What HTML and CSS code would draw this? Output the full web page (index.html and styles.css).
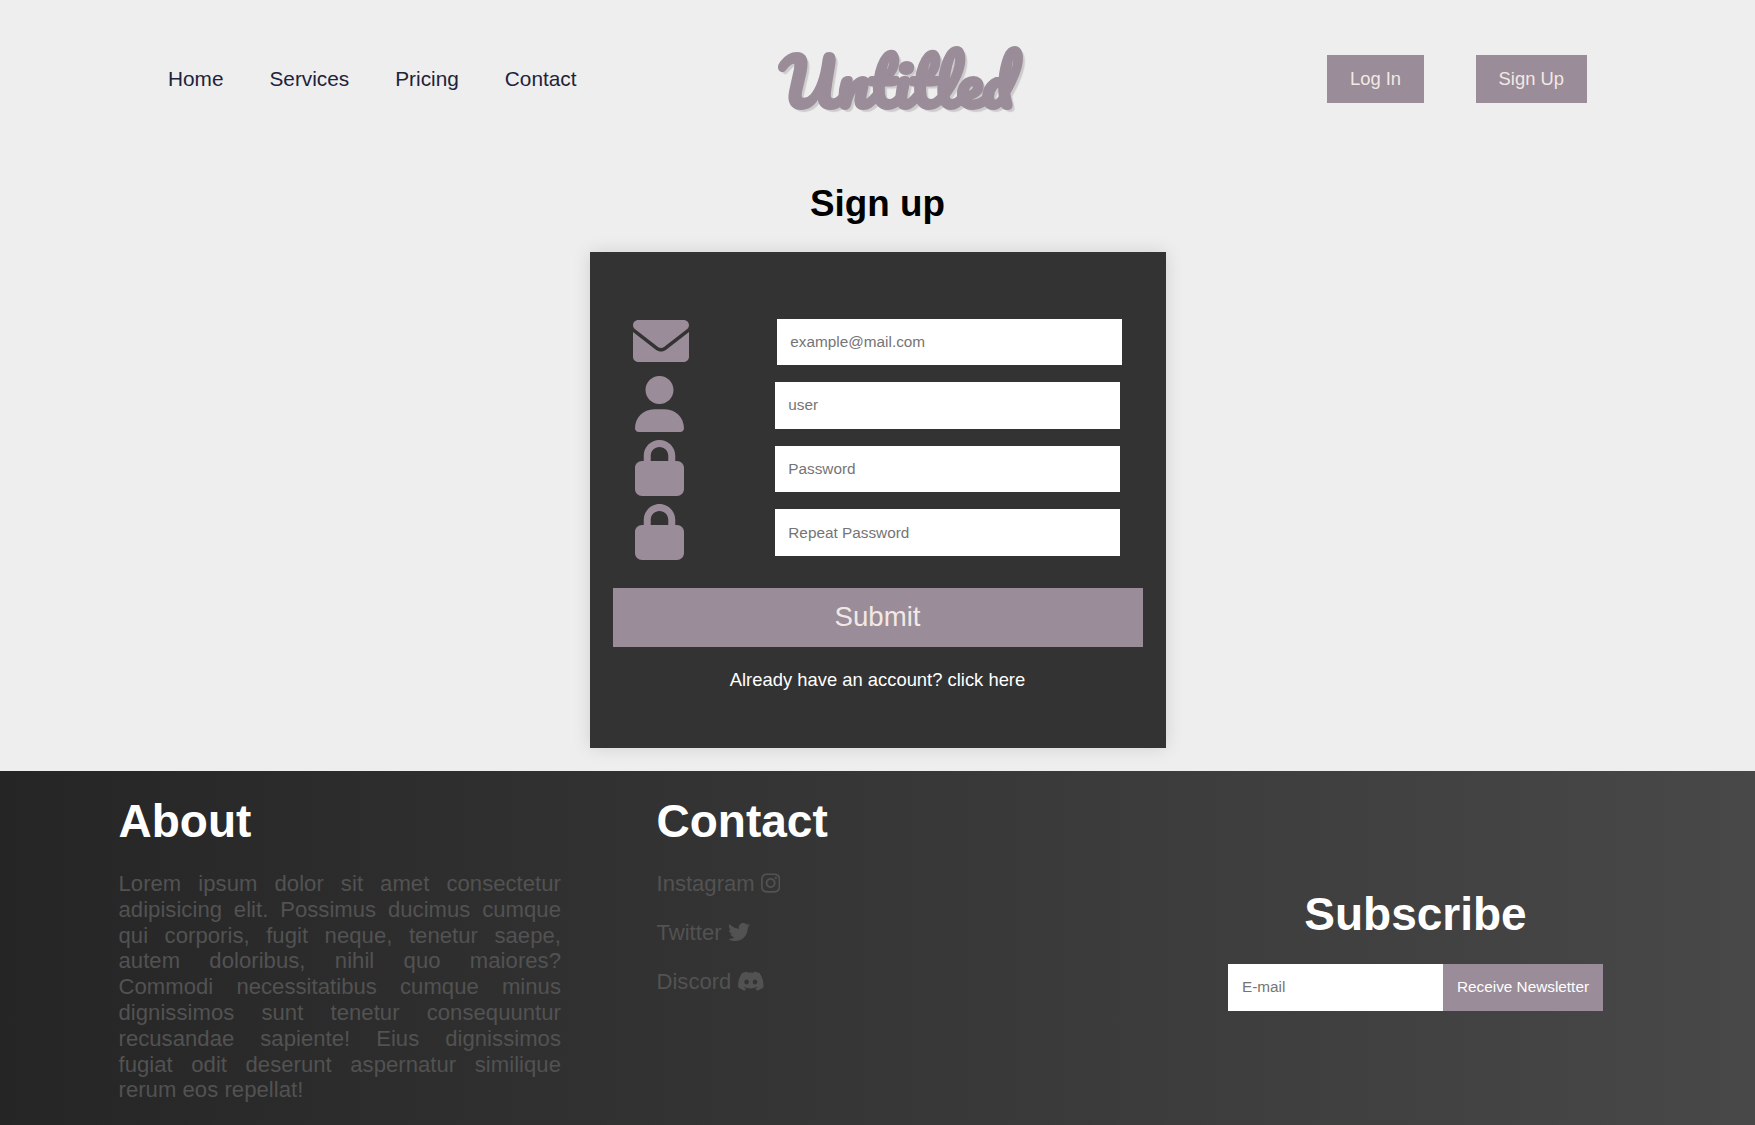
FILE: index.html
```html
<!DOCTYPE html>
<html lang="en">
<head>
<meta charset="utf-8">
<title>Untitled - Sign up</title>
<link rel="stylesheet" href="styles.css">
</head>
<body>
<header class="header">
  <nav class="nav">
    <a href="#">Home</a>
    <a href="#">Services</a>
    <a href="#">Pricing</a>
    <a href="#">Contact</a>
  </nav>
  <a class="logo" href="#">Untitled</a>
  <div class="actions">
    <a class="btn" href="#">Log In</a>
    <a class="btn" href="#">Sign Up</a>
  </div>
</header>
<main class="main">
  <h1 class="title">Sign up</h1>
  <form class="card">
    <div class="field field-mail">
      <svg class="icon icon-wide" viewBox="0 0 512 512"><path d="M256 352c-16.53 0-33.06-5.422-47.16-16.41L0 173.2V400C0 426.5 21.49 448 48 448h416c26.51 0 48-21.49 48-48V173.2l-208.8 162.5C289.1 346.6 272.5 352 256 352zM16.29 145.3l212.2 165.1c16.19 12.6 38.87 12.6 55.06 0l212.2-165.1C505.1 137.3 512 125 512 112C512 85.49 490.5 64 464 64h-416C21.49 64 0 85.49 0 112C0 125 6.01 137.3 16.29 145.3z"/></svg>
      <input class="input" type="text" placeholder="example@mail.com">
    </div>
    <div class="field">
      <svg class="icon" viewBox="0 0 448 512"><path d="M224 256c70.7 0 128-57.31 128-128s-57.3-128-128-128C153.3 0 96 57.31 96 128S153.3 256 224 256zM274.7 304H173.3C77.61 304 0 381.6 0 477.3c0 19.14 15.52 34.67 34.66 34.67h378.7C432.5 512 448 496.5 448 477.3C448 381.6 370.4 304 274.7 304z"/></svg>
      <input class="input" type="text" placeholder="user">
    </div>
    <div class="field">
      <svg class="icon" viewBox="0 0 448 512"><path d="M80 192V144C80 64.47 144.5 0 224 0C303.5 0 368 64.47 368 144V192H384C419.3 192 448 220.7 448 256V448C448 483.3 419.3 512 384 512H64C28.65 512 0 483.3 0 448V256C0 220.7 28.65 192 64 192H80zM144 192H304V144C304 99.82 268.2 64 224 64C179.8 64 144 99.82 144 144V192z"/></svg>
      <input class="input" type="password" placeholder="Password">
    </div>
    <div class="field">
      <svg class="icon" viewBox="0 0 448 512"><path d="M80 192V144C80 64.47 144.5 0 224 0C303.5 0 368 64.47 368 144V192H384C419.3 192 448 220.7 448 256V448C448 483.3 419.3 512 384 512H64C28.65 512 0 483.3 0 448V256C0 220.7 28.65 192 64 192H80zM144 192H304V144C304 99.82 268.2 64 224 64C179.8 64 144 99.82 144 144V192z"/></svg>
      <input class="input" type="password" placeholder="Repeat Password">
    </div>
    <button class="submit" type="button">Submit</button>
    <p class="login-hint">Already have an account? <a href="#">click here</a></p>
  </form>
</main>
<footer class="footer">
  <section class="about">
    <h2>About</h2>
    <p>Lorem ipsum dolor sit amet consectetur adipisicing elit. Possimus ducimus cumque qui corporis, fugit neque, tenetur saepe, autem doloribus, nihil quo maiores? Commodi necessitatibus cumque minus dignissimos sunt tenetur consequuntur recusandae sapiente! Eius dignissimos fugiat odit deserunt aspernatur similique rerum eos repellat!</p>
  </section>
  <section class="contact">
    <h2>Contact</h2>
    <ul>
      <li>Instagram <svg class="social" viewBox="0 0 448 512"><path d="M224.1 141c-63.6 0-114.9 51.3-114.9 114.9s51.3 114.9 114.9 114.9S339 319.5 339 255.9 287.7 141 224.1 141zm0 189.6c-41.1 0-74.7-33.5-74.7-74.7s33.5-74.7 74.7-74.7 74.7 33.5 74.7 74.7-33.6 74.7-74.7 74.7zm146.4-194.3c0 14.9-12 26.8-26.8 26.8-14.9 0-26.8-12-26.8-26.8s12-26.8 26.8-26.8 26.8 12 26.8 26.8zm76.1 27.2c-1.7-35.9-9.9-67.7-36.2-93.9-26.2-26.2-58-34.4-93.9-36.2-37-2.1-147.9-2.1-184.9 0-35.8 1.7-67.6 9.9-93.9 36.1s-34.4 58-36.2 93.9c-2.1 37-2.1 147.9 0 184.9 1.7 35.9 9.9 67.7 36.2 93.9s58 34.4 93.9 36.2c37 2.1 147.9 2.1 184.9 0 35.9-1.7 67.7-9.9 93.9-36.2 26.2-26.2 34.4-58 36.2-93.9 2.1-37 2.1-147.8 0-184.8zM398.8 388c-7.8 19.6-22.9 34.7-42.6 42.6-29.5 11.7-99.5 9-132.1 9s-102.7 2.6-132.1-9c-19.6-7.8-34.7-22.9-42.6-42.6-11.7-29.5-9-99.5-9-132.1s-2.6-102.7 9-132.1c7.8-19.6 22.9-34.7 42.6-42.6 29.5-11.7 99.5-9 132.1-9s102.7-2.6 132.1 9c19.6 7.8 34.7 22.9 42.6 42.6 11.7 29.5 9 99.5 9 132.1s2.7 102.7-9 132.1z"/></svg></li>
      <li>Twitter <svg class="social" viewBox="0 0 512 512"><path d="M459.37 151.716c.325 4.548.325 9.097.325 13.645 0 138.72-105.583 298.558-298.558 298.558-59.452 0-114.68-17.219-161.137-47.106 8.447.974 16.568 1.299 25.34 1.299 49.055 0 94.213-16.568 130.274-44.832-46.132-.975-84.792-31.188-98.112-72.772 6.498.974 12.995 1.624 19.818 1.624 9.421 0 18.843-1.3 27.614-3.573-48.081-9.747-84.143-51.98-84.143-102.985v-1.299c13.969 7.797 30.214 12.67 47.431 13.319-28.264-18.843-46.781-51.005-46.781-87.391 0-19.492 5.197-37.36 14.294-52.954 51.655 63.675 129.3 105.258 216.365 109.807-1.624-7.797-2.599-15.918-2.599-24.04 0-57.828 46.782-104.934 104.934-104.934 30.213 0 57.502 12.67 76.67 33.137 23.715-4.548 46.456-13.32 66.599-25.34-7.798 24.366-24.366 44.833-46.132 57.827 21.117-2.273 41.584-8.122 60.426-16.243-14.292 20.791-32.161 39.308-52.628 54.253z"/></svg></li>
      <li>Discord <svg class="social" viewBox="0 0 640 512"><path d="M524.531,69.836a1.5,1.5,0,0,0-.764-.7A485.065,485.065,0,0,0,404.081,32.03a1.816,1.816,0,0,0-1.923.91,337.461,337.461,0,0,0-14.9,30.6,447.848,447.848,0,0,0-134.426,0,309.541,309.541,0,0,0-15.135-30.6,1.89,1.89,0,0,0-1.924-.91A483.689,483.689,0,0,0,116.085,69.137a1.712,1.712,0,0,0-.788.676C39.068,183.651,18.186,294.69,28.43,404.354a2.016,2.016,0,0,0,.765,1.375A487.666,487.666,0,0,0,176.02,479.918a1.9,1.9,0,0,0,2.063-.676A348.2,348.2,0,0,0,208.12,430.4a1.86,1.86,0,0,0-1.019-2.588,321.173,321.173,0,0,1-45.868-21.853,1.885,1.885,0,0,1-.185-3.126c3.082-2.309,6.166-4.711,9.109-7.137a1.819,1.819,0,0,1,1.9-.256c96.229,43.917,200.41,43.917,295.5,0a1.812,1.812,0,0,1,1.924.233c2.944,2.426,6.027,4.851,9.132,7.16a1.884,1.884,0,0,1-.162,3.126,301.407,301.407,0,0,1-45.89,21.83,1.875,1.875,0,0,0-1,2.611,391.055,391.055,0,0,0,30.014,48.815,1.864,1.864,0,0,0,2.063.7A486.048,486.048,0,0,0,610.7,405.729a1.882,1.882,0,0,0,.765-1.352C623.729,277.594,590.933,167.465,524.531,69.836ZM222.491,337.58c-28.972,0-52.844-26.587-52.844-59.239S193.056,219.1,222.491,219.1c29.665,0,53.306,26.82,52.843,59.239C275.334,310.993,251.924,337.58,222.491,337.58Zm195.38,0c-28.971,0-52.843-26.587-52.843-59.239S388.437,219.1,417.871,219.1c29.667,0,53.307,26.82,52.844,59.239C470.715,310.993,447.538,337.58,417.871,337.58Z"/></svg></li>
    </ul>
  </section>
  <section class="subscribe">
    <h2>Subscribe</h2>
    <form class="newsletter">
      <input type="text" placeholder="E-mail">
      <button type="button">Receive Newsletter</button>
    </form>
  </section>
</footer>
</body>
</html>
```

FILE: styles.css
```css
* {
  box-sizing: border-box;
  margin: 0;
  padding: 0;
}

body {
  min-height: 100vh;
  display: flex;
  flex-direction: column;
  overflow: hidden;
  background: #eee;
  font-family: Arial, "Liberation Sans", sans-serif;
  font-size: 18.4px;
}

a {
  color: inherit;
  text-decoration: none;
}

input,
button {
  border: 0;
  border-radius: 0;
  font-family: inherit;
}

input::placeholder {
  color: #757575;
}

.header {
  height: 158px;
  padding: 0 168px 0 168px;
  display: grid;
  grid-template-columns: 612px 250px 1fr;
  align-items: center;
}

.nav {
  display: flex;
  gap: 46px;
  color: #22223b;
  font-size: 20.8px;
}

.logo {
  padding-top: 3px;
  color: #9a8c98;
  font-family: Pacifico, cursive;
  font-size: 64.4px;
  font-weight: bold;
  line-height: 130px;
  text-shadow: 3px 3px 1px #ccc;
  -webkit-text-stroke: 2px #9a8c98;
}

.actions {
  display: flex;
  justify-content: flex-end;
  gap: 51.5px;
}

.btn {
  height: 48px;
  padding: 0 23px;
  background: #9a8c98;
  color: #f2e9e4;
  line-height: 48px;
}

.main {
  height: 613px;
  display: flex;
  flex-direction: column;
  align-items: center;
}

.title {
  margin-top: 25px;
  font-size: 36.8px;
  line-height: 42px;
}

.card {
  width: 576px;
  height: 496px;
  margin-top: 27px;
  padding: 58px 23px 0;
  background: #333;
  box-shadow: 0 0 17px rgba(0, 0, 0, 0.12);
}

.field {
  height: 63.6px;
  padding: 0 22.5px 0 22px;
  display: flex;
  align-items: center;
  justify-content: space-between;
}

.field-mail {
  padding: 0 20.5px 0 20px;
}

.icon {
  width: 49px;
  height: 56px;
  margin-top: -2px;
  fill: #9a8c98;
}

.icon-wide {
  width: 56px;
}

.input {
  width: 345.5px;
  height: 46.5px;
  padding: 0 13.8px;
  background: #fff;
  font-size: 15.33px;
}

.submit {
  width: 100%;
  height: 59px;
  margin-top: 23.5px;
  background: #9a8c98;
  color: #f2e9e4;
  font-size: 27.6px;
}

.login-hint {
  margin-top: 22px;
  color: #fff;
  line-height: 22px;
  text-align: center;
}

.footer {
  height: 354px;
  padding: 0 152px 0 118.5px;
  display: grid;
  grid-template-columns: 442.5px 1fr 375px;
  column-gap: 95.5px;
  background: linear-gradient(to right, #252525, #484848);
  color: #525252;
  font-size: 22.08px;
}

.footer h2 {
  color: #fff;
  font-size: 46px;
  line-height: 52px;
}

.about,
.contact {
  padding-top: 24px;
}

.about p {
  margin-top: 24px;
  line-height: 25.8px;
  text-align: justify;
  letter-spacing: 0.04px;
}

.contact ul {
  margin-top: 24px;
  display: grid;
  gap: 23px;
  list-style: none;
}

.contact li {
  height: 26px;
  line-height: 26px;
  white-space: nowrap;
}

.social {
  height: 22.08px;
  fill: currentColor;
  vertical-align: -2.8px;
}

.subscribe {
  padding-top: 117px;
  text-align: center;
}

.newsletter {
  height: 46.5px;
  margin-top: 24px;
  display: flex;
}

.newsletter input {
  width: 215px;
  padding: 0 14px;
  background: #fff;
  font-size: 15.33px;
}

.newsletter button {
  flex: 1;
  background: #9a8c98;
  color: #fff;
  font-size: 15.33px;
}
```
